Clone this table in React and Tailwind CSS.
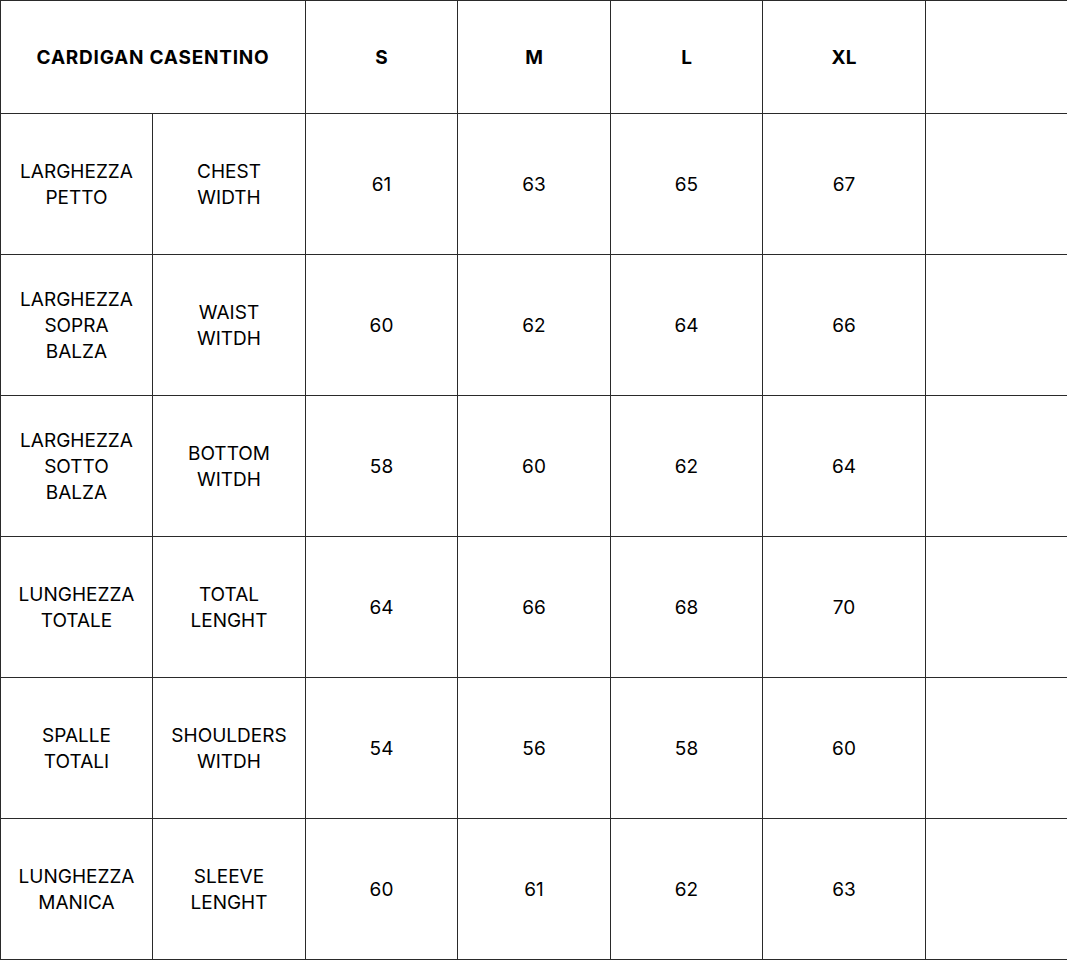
import React from "react";

const SIZES = ["S", "M", "L", "XL"];

const ROWS = [
  { it: ["LARGHEZZA", "PETTO"], en: ["CHEST", "WIDTH"], v: [61, 63, 65, 67] },
  { it: ["LARGHEZZA", "SOPRA", "BALZA"], en: ["WAIST", "WITDH"], v: [60, 62, 64, 66] },
  { it: ["LARGHEZZA", "SOTTO", "BALZA"], en: ["BOTTOM", "WITDH"], v: [58, 60, 62, 64] },
  { it: ["LUNGHEZZA", "TOTALE"], en: ["TOTAL", "LENGHT"], v: [64, 66, 68, 70] },
  { it: ["SPALLE", "TOTALI"], en: ["SHOULDERS", "WITDH"], v: [54, 56, 58, 60] },
  { it: ["LUNGHEZZA", "MANICA"], en: ["SLEEVE", "LENGHT"], v: [60, 61, 62, 63] },
];

const Lines = ({ lines }) =>
  lines.map((l, i) => (
    <span key={i} className="block">
      {l}
    </span>
  ));

const cell = "border border-[#2a2a2a] text-center align-middle p-0 pt-[2px]";

export default function App() {
  return (
    <div className="bg-white w-[1067px] h-[961px] font-['Inter',sans-serif] text-[19px] leading-[26px] text-black">
      <table className="table-fixed border-collapse w-[1067px]">
        <colgroup>
          <col className="w-[152px]" />
          <col className="w-[153px]" />
          <col className="w-[152px]" />
          <col className="w-[153px]" />
          <col className="w-[152px]" />
          <col className="w-[163px]" />
          <col className="w-[142px]" />
        </colgroup>
        <thead>
          <tr className="h-[113px]">
            <th colSpan={2} className={`${cell} font-bold tracking-[0.04em]`}>
              CARDIGAN CASENTINO
            </th>
            {SIZES.map((s) => (
              <th key={s} className={`${cell} font-bold`}>
                {s}
              </th>
            ))}
            <th className={cell}></th>
          </tr>
        </thead>
        <tbody>
          {ROWS.map((r, i) => (
            <tr key={i} className="h-[141px]">
              <td className={cell}>
                <Lines lines={r.it} />
              </td>
              <td className={cell}>
                <Lines lines={r.en} />
              </td>
              {r.v.map((n, j) => (
                <td key={j} className={cell}>
                  {n}
                </td>
              ))}
              <td className={cell}></td>
            </tr>
          ))}
        </tbody>
      </table>
    </div>
  );
}
